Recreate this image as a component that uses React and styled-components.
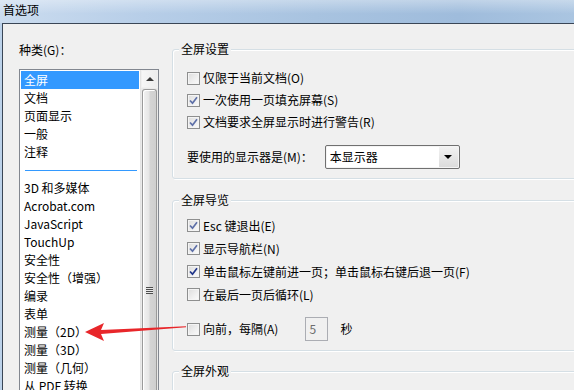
import React from "react";
import styled, { createGlobalStyle } from "styled-components";

const Global = createGlobalStyle`
  html, body { margin: 0; padding: 0; }
  body {
    background: #f0f0f0;
    font-family: "Noto Sans CJK SC", "Microsoft YaHei", sans-serif;
    font-size: 12px;
    color: #000;
    text-spacing-trim: space-all;
    font-feature-settings: "chws" 0, "halt" 0, "palt" 0;
  }
`;

const Frame = styled.div`
  position: relative;
  width: 574px;
  height: 390px;
  overflow: hidden;
  background: linear-gradient(to right, #bcd2ea, #a9c4e0);
  display: flex;
  flex-direction: column;
`;

const TitleBar = styled.div`
  height: 23px;
  flex: none;
  padding-left: 3px;
  line-height: 20px;
  font-size: 12px;
  color: #000;
  background:
    linear-gradient(to bottom, rgba(255,255,255,0.35), rgba(255,255,255,0) 60%),
    linear-gradient(to right, #cbdcef 0%, #b7cee8 25%, #a8c3e0 55%, #9fbcdc 80%, #aac5e1 100%);
`;

const Client = styled.div`
  flex: 1;
  display: flex;
  margin-left: 2px;
  border-left: 1px solid #3a4656;
  border-top: 1px solid #3a4656;
  background: #f0f0f0;
  min-height: 0;
`;

const LeftPane = styled.div`
  width: 169px;
  flex: none;
  padding-left: 16px;
  box-sizing: border-box;
  display: flex;
  flex-direction: column;
`;

const CategoryLabel = styled.div`
  margin-top: 18px;
  line-height: 16px;
  height: 16px;
`;

const ListBox = styled.div`
  margin-top: 11px;
  width: 140px;
  flex: 1;
  box-sizing: border-box;
  border: 1px solid #828790;
  border-bottom: none;
  background: #fff;
  display: flex;
`;

const Items = styled.div`
  width: 121px;
  padding: 1px 1px 0 1px;
  box-sizing: border-box;
  overflow: hidden;
`;

const Item = styled.div`
  height: 18px;
  line-height: 18px;
  padding-left: 3px;
  white-space: nowrap;
  background: ${(p) => (p.$selected ? "#3399ff" : "transparent")};
  color: ${(p) => (p.$selected ? "#fff" : "#000")};
`;

const Separator = styled.div`
  height: 18px;
  display: flex;
  align-items: center;
  padding: 0 2px 0 4px;
  &::after {
    content: "";
    flex: 1;
    height: 1px;
    background: #3399ff;
  }
`;

const ScrollBar = styled.div`
  width: 17px;
  flex: none;
  display: flex;
  flex-direction: column;
  background: #eaeaea;
  border-left: 1px solid #e3e3e3;
`;

const ScrollButton = styled.div`
  height: 18px;
  flex: none;
  display: flex;
  align-items: center;
  justify-content: center;
  background: linear-gradient(to right, #f7f7f7, #ededed);
  border: 1px solid #f0f0f0;
  box-sizing: border-box;
  &::after {
    content: "";
    border-left: 4px solid transparent;
    border-right: 4px solid transparent;
    border-bottom: 4px solid #3a3a3a;
  }
`;

const Thumb = styled.div`
  flex: 1;
  margin: 1px 1px 0 1px;
  border: 1px solid #9a9a9a;
  border-bottom: none;
  border-radius: 3px 3px 0 0;
  background: linear-gradient(to right, #f2f2f2 0%, #e6e6e6 45%, #d4d4d4 55%, #cfcfcf 100%);
  box-shadow: inset 1px 1px 0 #fff;
  display: flex;
  justify-content: center;
  padding-top: 197px;
  box-sizing: border-box;
`;

const Grip = styled.div`
  width: 7px;
  height: 7px;
  background: repeating-linear-gradient(to bottom, #4d4d4d 0 1px, #e8e8e8 1px 2px);
`;

const RightPane = styled.div`
  flex: 1;
  padding-left: 0;
  padding-top: 25px;
  display: flex;
  flex-direction: column;
  min-width: 0;
`;

const Group = styled.div`
  position: relative;
  width: 440px;
  margin-top: ${(p) => p.$top || 0}px;
  border: 1px solid #d5dfe5;
  border-radius: 3px;
  box-shadow: inset 1px 1px 0 #fff, 1px 1px 0 #fff;
  padding: ${(p) => p.$pad || "17px 0 9px 14px"};
  display: flex;
  flex-direction: column;
  box-sizing: border-box;
`;

const GroupTitle = styled.span`
  position: absolute;
  left: 6px;
  top: -9px;
  padding: 0 2px;
  line-height: 16px;
  background: #f0f0f0;
`;

const Row = styled.div`
  height: ${(p) => p.$h || 22}px;
  display: flex;
  align-items: center;
  white-space: nowrap;
  margin-top: ${(p) => p.$mt || 0}px;
`;

const Box = styled.span`
  width: 13px;
  height: 13px;
  box-sizing: border-box;
  border: 1px solid #8e8f8f;
  background: linear-gradient(135deg, #dcdcdc 0%, #f0f0f0 60%, #fbfbfb 100%);
  box-shadow: inset 0 0 0 1px #f4f4f4;
  display: flex;
  align-items: center;
  justify-content: center;
  margin-right: 3px;
  flex: none;
`;

const Label = styled.span`
  line-height: 16px;
  color: #000;
`;

const Check = ({ checked, dark }) => (
  <Box>
    {checked && (
      <svg width="9" height="9" viewBox="0 0 9 9">
        <path
          d="M1 4.5 L3.5 7.2 L8 1.2"
          fill="none"
          stroke={dark ? "#21368a" : "#5e70a8"}
          strokeWidth="1.7"
        />
      </svg>
    )}
  </Box>
);

const CheckRow = ({ label, checked, dark, h }) => (
  <Row $h={h}>
    <Check checked={checked} dark={dark} />
    <Label>{label}</Label>
  </Row>
);

const Select = styled.div`
  margin-left: 12px;
  width: 135px;
  height: 24px;
  box-sizing: border-box;
  border: 1px solid #707070;
  border-radius: 2px;
  background: #fff;
  display: flex;
  align-items: stretch;
  box-shadow: inset 0 0 0 1px #f4f4f4;
`;

const SelectText = styled.span`
  flex: 1;
  padding-left: 4px;
  line-height: 22px;
`;

const DropButton = styled.span`
  width: 19px;
  margin: 1px;
  background: linear-gradient(to bottom, #f2f2f2, #dcdcdc);
  display: flex;
  align-items: center;
  justify-content: center;
  &::after {
    content: "";
    border-left: 4px solid transparent;
    border-right: 4px solid transparent;
    border-top: 4px solid #000;
  }
`;

const NumberBox = styled.span`
  margin-left: 27px;
  width: 23px;
  height: 24px;
  box-sizing: border-box;
  border: 1px solid #abadb3;
  background: #f0f0f0;
  color: #6d6d6d;
  padding-left: 3px;
  line-height: 22px;
`;

const Unit = styled.span`
  margin-left: 12px;
  line-height: 16px;
`;

const ArrowSvg = styled.svg`
  position: absolute;
  left: 82px;
  top: 318px;
`;

const categories = [
  "全屏",
  "文档",
  "页面显示",
  "一般",
  "注释",
  "-",
  "3D 和多媒体",
  "Acrobat.com",
  "JavaScript",
  "TouchUp",
  "安全性",
  "安全性（增强）",
  "编录",
  "表单",
  "测量（2D）",
  "测量（3D）",
  "测量（几何）",
  "从 PDF 转换",
];

export default function App() {
  return (
    <>
      <Global />
      <Frame>
        <TitleBar>首选项</TitleBar>
        <Client>
          <LeftPane>
            <CategoryLabel>种类(G)：</CategoryLabel>
            <ListBox>
              <Items>
                {categories.map((c, i) =>
                  c === "-" ? (
                    <Separator key={i} />
                  ) : (
                    <Item key={i} $selected={i === 0}>
                      {c}
                    </Item>
                  )
                )}
              </Items>
              <ScrollBar>
                <ScrollButton />
                <Thumb>
                  <Grip />
                </Thumb>
              </ScrollBar>
            </ListBox>
          </LeftPane>
          <RightPane>
            <Group>
              <GroupTitle>全屏设置</GroupTitle>
              <CheckRow label="仅限于当前文档(O)" />
              <CheckRow label="一次使用一页填充屏幕(S)" checked />
              <CheckRow label="文档要求全屏显示时进行警告(R)" checked />
              <Row $h={24} $mt={12}>
                <Label>要使用的显示器是(M)：</Label>
                <Select>
                  <SelectText>本显示器</SelectText>
                  <DropButton />
                </Select>
              </Row>
            </Group>
            <Group $top={21} $pad="13px 0 9px 14px">
              <GroupTitle>全屏导览</GroupTitle>
              <CheckRow h={23} label="Esc 键退出(E)" checked />
              <CheckRow h={23} label="显示导航栏(N)" checked />
              <CheckRow h={23} label="单击鼠标左键前进一页；单击鼠标右键后退一页(F)" checked dark />
              <CheckRow h={23} label="在最后一页后循环(L)" />
              <Row $h={24} $mt={11}>
                <Check />
                <Label>向前，每隔(A)</Label>
                <NumberBox>5</NumberBox>
                <Unit>秒</Unit>
              </Row>
            </Group>
            <Group $top={20} $pad="40px 0 0 14px">
              <GroupTitle>全屏外观</GroupTitle>
            </Group>
          </RightPane>
        </Client>
        <ArrowSvg width="110" height="24" viewBox="0 0 110 24">
          <path d="M3 14 L22 5 L19 12 L104 8.2 L104 9.2 L19 16 L22 23 Z" fill="#e8262a" />
        </ArrowSvg>
      </Frame>
    </>
  );
}
